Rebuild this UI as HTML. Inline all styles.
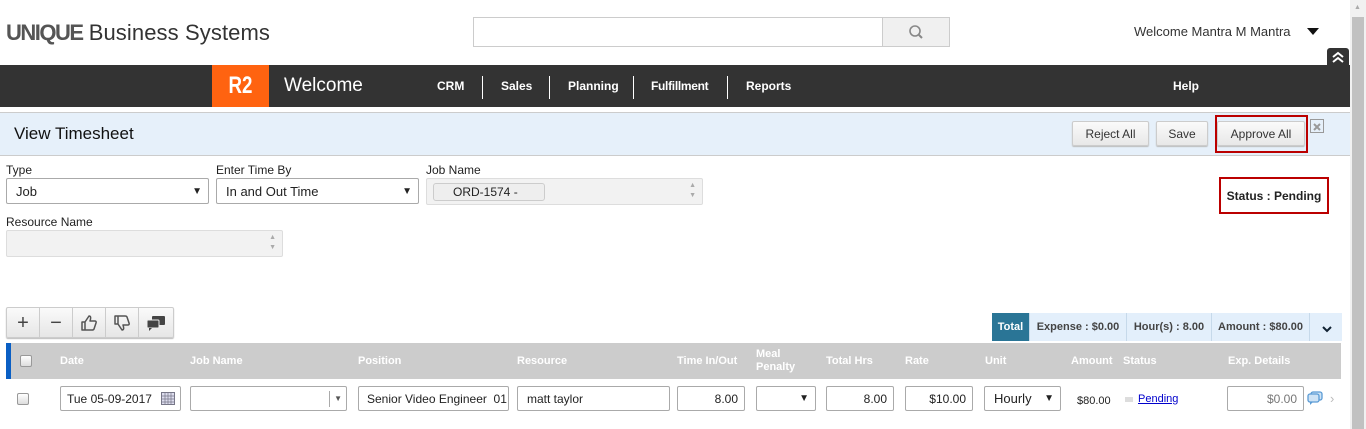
<!DOCTYPE html>
<html><head><style>
*{box-sizing:border-box;margin:0;padding:0}
body{width:1366px;height:429px;overflow:hidden;background:#fff;font-family:"Liberation Sans",Arial,sans-serif;position:relative;color:#222}
.a{position:absolute}
.inp{position:absolute;border:1px solid #aaa;border-radius:2px;background:#fff;font-size:12px;padding-left:9px;display:flex;align-items:center}
.dis{background:#f2f2f2;border:1px solid #ddd}
.lbl{position:absolute;font-size:12px;color:#222}
.nav{position:absolute;top:79px;color:#fff;font-size:12px;font-weight:bold}
.sep{position:absolute;top:76px;width:1px;height:23px;background:#fff}
.btn{position:absolute;top:121px;height:25px;border:1px solid #ccc;border-radius:2px;background:linear-gradient(#fafafa,#e8e8e8);font-size:12px;color:#333;display:flex;align-items:center;justify-content:center;box-shadow:0 1px 1px #bbb}
.th{position:absolute;top:355px;font-size:11px;font-weight:bold;color:#fff}
.tb{position:absolute;top:308px;width:33px;height:30px;border-right:1px solid #ccc;display:flex;align-items:center;justify-content:center;font-size:20px;color:#444}
.tot{position:absolute;top:313px;height:28px;font-size:11px;font-weight:bold;color:#444;display:flex;align-items:center;justify-content:center;border-right:1px solid #c6d9ea}
.r{justify-content:flex-end;padding-right:6px}
.chk{position:absolute;width:12px;height:12px;border:1px solid #999;border-radius:2px;background:linear-gradient(#fff,#ddd)}
</style></head><body>
<div class="a" style="left:6px;top:20px;font-size:22px;color:#555"><b style="font-weight:900;letter-spacing:-1.5px">UNIQUE</b> <span style="color:#333;letter-spacing:0.1px">Business Systems</span></div>
<div class="a" style="left:473px;top:17px;width:410px;height:30px;border:1px solid #ccc"></div>
<div class="a" style="left:882px;top:17px;width:68px;height:30px;border:1px solid #ccc;background:#f0f0f0"><svg width="68" height="28" viewBox="0 0 68 28"><circle cx="32" cy="13" r="5" fill="none" stroke="#888" stroke-width="1.6"/><line x1="36" y1="17" x2="39" y2="20" stroke="#888" stroke-width="2"/></svg></div>
<div class="a" style="left:1134px;top:24px;font-size:13px;color:#333">Welcome Mantra M Mantra</div>
<div class="a" style="left:1307px;top:28px;width:0;height:0;border-left:6px solid transparent;border-right:6px solid transparent;border-top:7px solid #111"></div>
<div class="a" style="left:1327px;top:48px;width:22px;height:18px;background:#333;border-radius:3px 3px 0 0"><svg width="22" height="18"><path d="M6 9L11 5L16 9M6 14L11 10L16 14" fill="none" stroke="#fff" stroke-width="2"/></svg></div>
<div class="a" style="left:0;top:65px;width:1350px;height:42px;background:#333"></div>
<div class="a" style="left:212px;top:65px;width:57px;height:42px;background:#ff6310"></div>
<div class="a" style="left:212px;top:65px;width:57px;height:42px;color:#fff;font-size:24px;font-weight:bold;text-align:center;line-height:42px;transform:scaleX(0.78)">R2</div>
<div class="a" style="left:284px;top:75px;font-size:19px;color:#fff">Welcome</div>
<div class="nav" style="left:437px">CRM</div><div class="sep" style="left:482px"></div>
<div class="nav" style="left:501px">Sales</div><div class="sep" style="left:549px"></div>
<div class="nav" style="left:568px">Planning</div><div class="sep" style="left:633px"></div>
<div class="nav" style="left:651px;letter-spacing:-0.3px">Fulfillment</div><div class="sep" style="left:727px"></div>
<div class="nav" style="left:746px">Reports</div>
<div class="nav" style="left:1173px">Help</div>
<div class="a" style="left:0;top:112px;width:1350px;height:44px;background:#e6f0fa;border-top:1px solid #ccc;border-bottom:1px solid #ccc"></div>
<div class="a" style="left:14px;top:124px;font-size:17px;color:#111">View Timesheet</div>
<div class="btn" style="left:1072px;width:77px">Reject All</div>
<div class="btn" style="left:1156px;width:52px">Save</div>
<div class="btn" style="left:1217px;width:88px">Approve All</div>
<div class="a" style="left:1215px;top:115px;width:93px;height:38px;border:2px solid #b00"></div>
<div class="a" style="left:1310px;top:119px;width:14px;height:14px;border:1px solid #999"><svg width="12" height="12"><path d="M3 3L9 9M9 3L3 9" stroke="#999" stroke-width="2"/></svg></div>
<div class="lbl" style="left:6px;top:163px">Type</div>
<div class="lbl" style="left:216px;top:163px">Enter Time By</div>
<div class="lbl" style="left:426px;top:163px">Job Name</div>
<div class="inp" style="left:6px;top:178px;width:203px;height:26px;font-size:13px">Job<span style="position:absolute;right:6px;font-size:10px">▼</span></div>
<div class="inp" style="left:216px;top:178px;width:203px;height:26px;font-size:13px">In and Out Time<span style="position:absolute;right:6px;font-size:10px">▼</span></div>
<div class="inp dis" style="left:426px;top:178px;width:277px;height:27px"><div style="position:absolute;left:6px;top:4px;width:112px;height:18px;border:1px solid #ccc;border-radius:3px;background:#eee;font-size:12px;padding-left:19px;line-height:16px">ORD-1574 -</div><span style="position:absolute;right:6px;top:2px;font-size:7px;color:#aaa;line-height:10px">▲<br>▼</span></div>
<div class="lbl" style="left:6px;top:215px">Resource Name</div>
<div class="inp dis" style="left:6px;top:230px;width:277px;height:27px"><span style="position:absolute;right:6px;top:2px;font-size:7px;color:#aaa;line-height:10px">▲<br>▼</span></div>
<div class="a" style="left:1219px;top:177px;width:110px;height:37px;border:2px solid #b00;font-size:12px;font-weight:bold;display:flex;align-items:center;justify-content:center">Status : Pending</div>
<div class="a" style="left:6px;top:307px;width:168px;height:31px;border:1px solid #ccc;border-radius:2px;background:linear-gradient(#fafafa,#e6e6e6);box-shadow:0 1px 1px #bbb"></div>
<div class="tb" style="left:7px">+</div><div class="tb" style="left:40px">−</div>
<div class="tb" style="left:73px"><svg width="18" height="18" viewBox="0 0 18 18"><path d="M2 8H5V16H2Z M5 8L9 2C11 2 11 4 10 7H15C16 7 16.5 8 16 9L14 15C13.7 16 13 16 12 16H5" fill="none" stroke="#555" stroke-width="1.5" stroke-linejoin="round"/></svg></div>
<div class="tb" style="left:106px"><svg width="18" height="18" viewBox="0 0 18 18"><g transform="translate(0,18) scale(1,-1)"><path d="M2 8H5V16H2Z M5 8L9 2C11 2 11 4 10 7H15C16 7 16.5 8 16 9L14 15C13.7 16 13 16 12 16H5" fill="none" stroke="#555" stroke-width="1.5" stroke-linejoin="round"/></g></svg></div>
<div class="tb" style="left:139px;border:none"><svg width="20" height="17"><rect x="6" y="1" width="13" height="9" rx="1" fill="#444"/><rect x="1" y="5" width="12" height="8" rx="1" fill="#444" stroke="#eee"/><path d="M3 13 L3 16 L6 13Z" fill="#444"/></svg></div>
<div class="a" style="left:992px;top:313px;width:350px;height:28px;background:#e3effb"></div>
<div class="tot" style="left:992px;width:38px;background:#2a7596;color:#fff">Total</div>
<div class="tot" style="left:1030px;width:97px">Expense : $0.00</div>
<div class="tot" style="left:1127px;width:85px">Hour(s) : 8.00</div>
<div class="tot" style="left:1212px;width:98px">Amount : $80.00</div>
<div class="a" style="left:1321px;top:321px"><svg width="12" height="10"><path d="M2 3L6 7L10 3" fill="none" stroke="#123" stroke-width="2"/></svg></div>
<div class="a" style="left:6px;top:343px;width:1335px;height:36px;background:#ccc;border-left:5px solid #0a5fc4"></div>
<div class="chk" style="left:20px;top:355px"></div>
<div class="th" style="left:60px">Date</div><div class="th" style="left:190px">Job Name</div><div class="th" style="left:358px">Position</div><div class="th" style="left:517px">Resource</div><div class="th" style="left:677px">Time In/Out</div>
<div class="th" style="left:756px;top:348px;line-height:13px">Meal<br>Penalty</div>
<div class="th" style="left:826px">Total Hrs</div><div class="th" style="left:905px">Rate</div><div class="th" style="left:985px">Unit</div><div class="th" style="left:1071px">Amount</div><div class="th" style="left:1123px">Status</div><div class="th" style="left:1228px">Exp. Details</div>
<div class="chk" style="left:17px;top:393px"></div>
<div class="inp" style="left:60px;top:386px;width:121px;height:25px;padding-left:6px">Tue 05-09-2017<svg style="position:absolute;right:5px" width="14" height="13"><rect x=".5" y=".5" width="13" height="12" fill="#dde" stroke="#778"/><path d="M1 4H13M1 7H13M1 10H13M4 1V12M7 1V12M10 1V12" stroke="#778" stroke-width=".7"/></svg></div>
<div class="inp" style="left:190px;top:386px;width:157px;height:25px"><div style="position:absolute;right:16px;top:4px;height:16px;border-left:1px solid #aaa"></div><span style="position:absolute;right:4px;font-size:8px;color:#555">▼</span></div>
<div class="inp" style="left:358px;top:386px;width:151px;height:25px;overflow:hidden;white-space:nowrap;padding-left:8px">Senior Video Engineer&nbsp; 01</div>
<div class="inp" style="left:517px;top:386px;width:153px;height:25px">matt taylor</div>
<div class="inp r" style="left:677px;top:386px;width:68px;height:25px">8.00</div>
<div class="inp" style="left:756px;top:386px;width:60px;height:25px"><span style="position:absolute;right:6px;font-size:10px">▼</span></div>
<div class="inp r" style="left:826px;top:386px;width:68px;height:25px">8.00</div>
<div class="inp r" style="left:905px;top:386px;width:68px;height:25px">$10.00</div>
<div class="inp" style="left:984px;top:386px;width:77px;height:25px;font-size:13px">Hourly<span style="position:absolute;right:6px;font-size:10px">▼</span></div>
<div class="a" style="left:1077px;top:395px;font-size:11px">$80.00</div>
<div class="a" style="left:1125px;top:397px;width:8px;height:5px;background:#ddd"></div>
<div class="a" style="left:1138px;top:393px;font-size:11px;color:#00c;text-decoration:underline">Pending</div>
<div class="inp r" style="left:1227px;top:386px;width:77px;height:25px;color:#777">$0.00</div>
<div class="a" style="left:1307px;top:391px"><svg width="16" height="14"><rect x="4" y="1" width="11" height="8" rx="2" fill="#cfe3f5" stroke="#5a9bd5" stroke-width="1.3"/><rect x="1" y="3" width="11" height="8" rx="2" fill="#cfe3f5" stroke="#5a9bd5" stroke-width="1.3"/><path d="M3 11L3 14L6 11" fill="#5a9bd5"/></svg></div>
<div class="a" style="left:1330px;top:391px;font-size:13px;color:#bbb">›</div>
<div class="a" style="left:1350px;top:0;width:16px;height:429px;background:#f1f1f1"></div>
<div class="a" style="left:1352px;top:17px;width:12px;height:412px;background:#c1c1c1"></div>
<div class="a" style="left:1354px;top:4px;font-size:7px;color:#aaa">▲</div>
</body></html>
